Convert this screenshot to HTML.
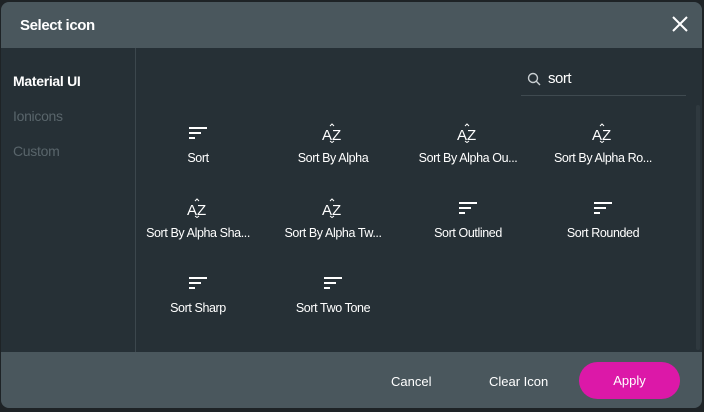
<!DOCTYPE html><html><head><style>
body{margin:0;width:704px;height:412px;background:#1e2326;font-family:"Liberation Sans",sans-serif;overflow:hidden;position:relative}
.dlg{position:absolute;left:1px;top:2px;width:701px;height:406px;border-radius:8px;overflow:hidden;background:#263036}
.hdr{position:absolute;left:0;top:0;width:100%;height:46px;background:#4a575d}
.hdr .t{position:absolute;left:19px;top:15px;color:#fff;font-size:15px;font-weight:bold;letter-spacing:-0.4px}
.x{position:absolute;left:670px;top:13px}
.side{position:absolute;left:0;top:46px;width:134px;height:304px;border-right:1px solid #3c474d}
.side div{position:absolute;left:12px;font-size:14px;letter-spacing:-0.3px}
.foot{position:absolute;left:0;top:350px;width:100%;height:56px;background:#4a575d}
.btn{position:absolute;color:#fff;font-size:13px;top:22px}
.apply{position:absolute;left:578px;top:10px;width:101px;height:37px;border-radius:19px;background:#dc18a8;color:#fff;font-size:13px;text-align:center;line-height:37px}
.search{position:absolute;left:520px;top:62px;width:165px;height:31px;border-bottom:1px solid #3f4a50}
.search span{position:absolute;left:27px;top:6px;color:#fff;font-size:15px;letter-spacing:-0.5px}
.it{position:absolute;width:134px;text-align:center;color:#fff;font-size:12.5px;letter-spacing:-0.4px}
.ic{height:22px;display:flex;align-items:center;justify-content:center;margin-bottom:7px}
.scroll{position:absolute;left:695px;top:103px;width:4px;height:245px;background:#2f393f;border-radius:2px}
</style></head><body>
<div class="dlg">
<div class="hdr"><div class="t">Select icon</div>
<svg class="x" width="18" height="18" viewBox="0 0 18 18"><path d="M2 2L16 16M16 2L2 16" stroke="#fff" stroke-width="2"/></svg></div>
<div class="side"><div style="top:25px;color:#fff;font-weight:bold">Material UI</div><div style="top:60px;color:#59656b">Ionicons</div><div style="top:95px;color:#59656b">Custom</div></div>
<div class="search"><svg style="position:absolute;left:6px;top:8px" width="14" height="14" viewBox="0 0 14 14"><circle cx="6" cy="6" r="4.5" stroke="#c9cfd2" stroke-width="1.4" fill="none"/><path d="M9.3 9.3L13 13" stroke="#c9cfd2" stroke-width="1.4"/></svg><span>sort</span></div>
<div class="scroll"></div>
<div id="g"></div>
<div class="foot"><div class="btn" style="left:390px">Cancel</div><div class="btn" style="left:488px">Clear Icon</div><div class="apply">Apply</div></div>
</div>
<script>
var S='<svg width="20" height="14" viewBox="0 0 20 14"><path d="M1 2h18M1 7h12M1 12h6" stroke="#fff" stroke-width="2"/></svg>';
var A='<svg width="22" height="20" viewBox="0 0 22 20"><text x="0" y="17" fill="#fff" font-size="15" font-family="Liberation Sans">A</text><text x="10" y="17" fill="#fff" font-size="15" font-family="Liberation Sans">Z</text><path d="M8 3l2-2 2 2M8 18l2 1.5 2-1.5" stroke="#fff" fill="none" stroke-width="1"/></svg>';
var items=[[S,'Sort'],[A,'Sort By Alpha'],[A,'Sort By Alpha Ou...'],[A,'Sort By Alpha Ro...'],[A,'Sort By Alpha Sha...'],[A,'Sort By Alpha Tw...'],[S,'Sort Outlined'],[S,'Sort Rounded'],[S,'Sort Sharp'],[S,'Sort Two Tone']];
var h='';items.forEach(function(it,i){var c=i%4,r=Math.floor(i/4);h+='<div class="it" style="left:'+(130+c*135)+'px;top:'+(120+r*75)+'px"><div class="ic">'+it[0]+'</div>'+it[1]+'</div>';});
document.getElementById('g').innerHTML=h;
</script>
</body></html>
